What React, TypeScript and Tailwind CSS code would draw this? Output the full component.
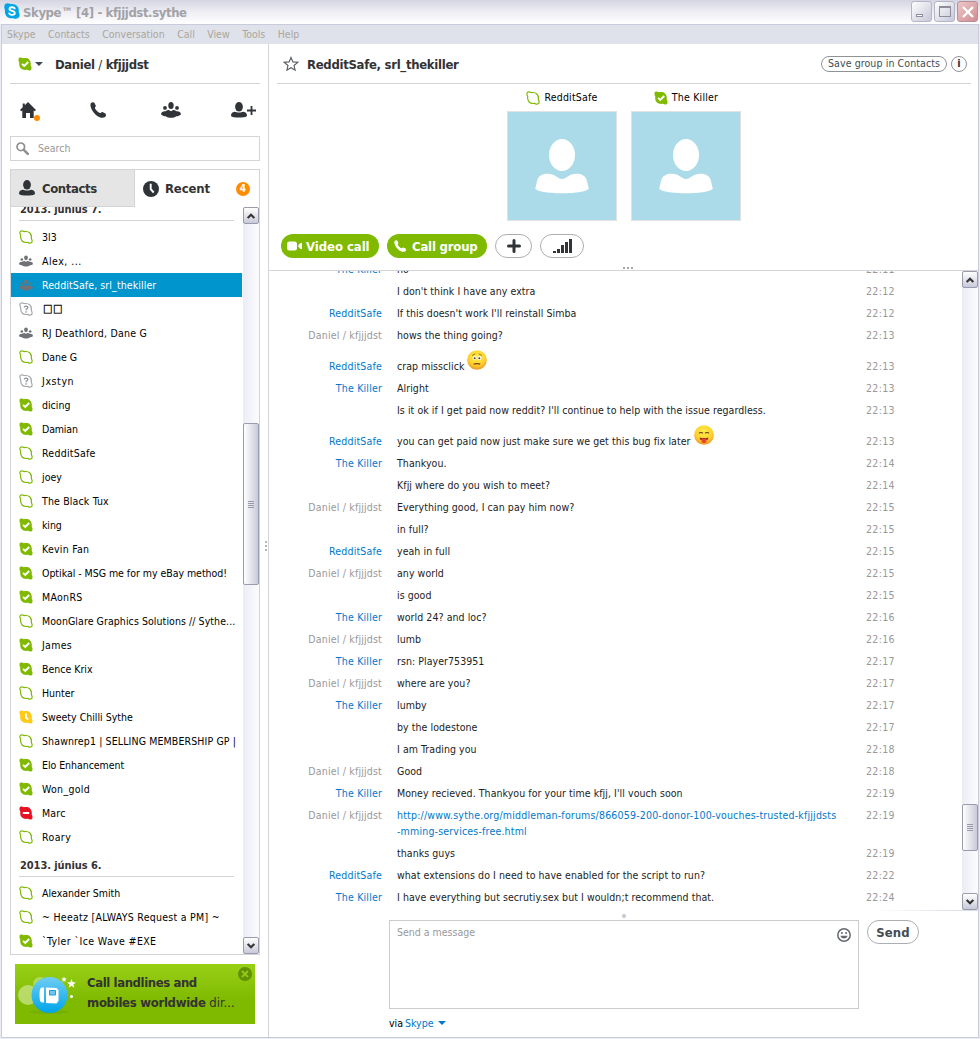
import React from 'react';

type Status = 'offline' | 'online' | 'away' | 'busy' | 'unknown' | 'group';

interface Contact {
  name: string;
  status: Status;
  selected?: boolean;
  track?: string;
}

interface Message {
  from?: string;
  text: string;
  time: string;
  me?: boolean;
  emoji?: 'worried' | 'tongue';
  link?: string[];
}

const june7: Contact[] = [
  { name: '3l3', status: 'offline' },
  { name: 'Alex, ...', status: 'group', track: 'tracking-[0.5px]' },
  { name: 'RedditSafe, srl_thekiller', status: 'group', selected: true },
  { name: '□□', status: 'unknown' },
  { name: 'RJ Deathlord, Dane G', status: 'group', track: 'tracking-[0.25px]' },
  { name: 'Dane G', status: 'offline' },
  { name: 'Jxstyn', status: 'unknown', track: 'tracking-[0.6px]' },
  { name: 'dicing', status: 'online' },
  { name: 'Damian', status: 'online', track: 'tracking-[-0.15px]' },
  { name: 'RedditSafe', status: 'offline', track: 'tracking-[0.25px]' },
  { name: 'joey', status: 'offline' },
  { name: 'The Black Tux', status: 'offline', track: 'tracking-[0.15px]' },
  { name: 'king', status: 'online', track: 'tracking-[-0.1px]' },
  { name: 'Kevin Fan', status: 'online', track: 'tracking-[0.25px]' },
  { name: 'Optikal - MSG me for my eBay method!', status: 'online', track: 'tracking-[-0.03px]' },
  { name: 'MAonRS', status: 'online', track: 'tracking-[0.3px]' },
  { name: 'MoonGlare Graphics Solutions // Sythe...', status: 'offline', track: 'tracking-[0.07px]' },
  { name: 'James', status: 'online', track: 'tracking-[0.3px]' },
  { name: 'Bence Krix', status: 'online' },
  { name: 'Hunter', status: 'offline' },
  { name: 'Sweety Chilli Sythe', status: 'away' },
  { name: 'Shawnrep1 | SELLING MEMBERSHIP GP |', status: 'offline', track: 'tracking-[0.12px]' },
  { name: 'Elo Enhancement', status: 'online', track: 'tracking-[-0.05px]' },
  { name: 'Won_gold', status: 'online', track: 'tracking-[0.3px]' },
  { name: 'Marc', status: 'busy', track: 'tracking-[0.2px]' },
  { name: 'Roary', status: 'offline', track: 'tracking-[0.4px]' },
];

const june6: Contact[] = [
  { name: 'Alexander Smith', status: 'offline' },
  { name: '~ Heeatz [ALWAYS Request a PM] ~', status: 'offline', track: 'tracking-[0.27px]' },
  { name: '`Tyler `Ice Wave #EXE', status: 'online', track: 'tracking-[0.38px]' },
];

const me = 'Daniel / kfjjjdst';

const messages: Message[] = [
  { from: 'The Killer', text: 'no', time: '22:11' },
  { text: "I don't think I have any extra", time: '22:12' },
  { from: 'RedditSafe', text: "If this doesn't work I'll reinstall Simba", time: '22:12' },
  { from: me, me: true, text: 'hows the thing going?', time: '22:13' },
  { from: 'RedditSafe', text: 'crap missclick', time: '22:13', emoji: 'worried' },
  { from: 'The Killer', text: 'Alright', time: '22:13' },
  { text: "Is it ok if I get paid now reddit? I'll continue to help with the issue regardless.", time: '22:13' },
  { from: 'RedditSafe', text: 'you can get paid now just make sure we get this bug fix later', time: '22:13', emoji: 'tongue' },
  { from: 'The Killer', text: 'Thankyou.', time: '22:14' },
  { text: 'Kfjj where do you wish to meet?', time: '22:14' },
  { from: me, me: true, text: 'Everything good, I can pay him now?', time: '22:15' },
  { text: 'in full?', time: '22:15' },
  { from: 'RedditSafe', text: 'yeah in full', time: '22:15' },
  { from: me, me: true, text: 'any world', time: '22:15' },
  { text: 'is good', time: '22:15' },
  { from: 'The Killer', text: 'world 24? and loc?', time: '22:16' },
  { from: me, me: true, text: 'lumb', time: '22:16' },
  { from: 'The Killer', text: 'rsn: Player753951', time: '22:17' },
  { from: me, me: true, text: 'where are you?', time: '22:17' },
  { from: 'The Killer', text: 'lumby', time: '22:17' },
  { text: 'by the lodestone', time: '22:17' },
  { text: 'I am Trading you', time: '22:18' },
  { from: me, me: true, text: 'Good', time: '22:18' },
  { from: 'The Killer', text: "Money recieved. Thankyou for your time kfjj, I'll vouch soon", time: '22:19' },
  {
    from: me,
    me: true,
    text: '',
    time: '22:19',
    link: [
      'http://www.sythe.org/middleman-forums/866059-200-donor-100-vouches-trusted-kfjjjdsts',
      '-mming-services-free.html',
    ],
  },
  { text: 'thanks guys', time: '22:19' },
  { from: 'RedditSafe', text: 'what extensions do I need to have enabled for the script to run?', time: '22:22' },
  { from: 'The Killer', text: 'I have everything but secrutiy.sex but I wouldn;t recommend that.', time: '22:24' },
];

const BLOB =
  'M1 .9C2.2.1 3.9.4 4.9 1.2 7.5.9 9.8 1.1 11.2 2.7 12.7 4.3 13 6.300 12.7 8.6 13.5 10 14 11.8 13 13 11.800 13.9 10.1 13.6 9.1 12.8 6.5 13.1 4.2 12.9 2.8 11.3 1.3 9.7 1 7.7 1.3 5.4.5 4 0 2.2 1 .9Z';

const GroupIcon: React.FC<{ className?: string }> = ({ className }) => (
  <svg viewBox="0 0 20 16" className={className} fill="currentColor">
    <ellipse cx="10" cy="3.5" rx="2.7" ry="3.5" />
    <circle cx="4" cy="5.900" r="1.900" />
    <circle cx="16" cy="5.900" r="1.900" />
    <path d="M0 12.300C.3 10 1.800 9 4.500 9.200 5.500 8.200 7 7.900 7.800 7.900L10 9.200l2.200-1.300c.8 0 2.300.3 3.300 1.300 2.700-.2 4.200.8 4.500 3.100-1.300 1.500-3 2-4.800 2-2.200 2-8.200 2-10.400 0-1.800 0-3.500-.5-4.800-2Z" />
  </svg>
);

const PersonIcon: React.FC<{ className?: string }> = ({ className }) => (
  <svg viewBox="0 0 16 16" className={className} fill="currentColor">
    <ellipse cx="8" cy="4.800" rx="3.900" ry="4.800" />
    <path d="M0 14c0-2.700 1-4.100 3.700-4.300 1.300-.1 2.300.8 4.300.8s3-.9 4.300-.8C15 9.900 16 11.300 16 14c-1.500 2-14.500 2-16 0Z" />
  </svg>
);

const PhoneIcon: React.FC<{ className?: string }> = ({ className }) => (
  <svg viewBox="0 0 16 16" className={className} fill="currentColor">
    <path d="M1 1C2 0 3.800 0 4.500 1L5.800 3.700c.3 1-1 1.600-.9 2.500C6 8.300 7.700 10 10 11.100c1 0 1.500-1.300 2.500-1l2.900 1.300c.9.900.8 3-.3 3.700-2 1.300-6 .9-9.700-2.700C1.200 8.300-.6 3.300 1 1Z" />
  </svg>
);

const StatusIcon: React.FC<{ status: Status; className?: string }> = ({ status, className = 'size-3.5' }) => {
  if (status === 'group') {
    return <GroupIcon className="h-3 w-3.5 text-[#6f7378]" />;
  }
  if (status === 'offline' || status === 'unknown') {
    return (
      <svg viewBox="0 0 14 14" className={className}>
        <path
          d={BLOB}
          transform="translate(.5 .5) scale(.93)"
          fill="none"
          stroke={status === 'offline' ? '#7fba00' : '#a5a9ac'}
          strokeWidth="1.300"
        />
        {status === 'unknown' && (
          <>
            <path d="M5.300 5.600c0-2 3.500-2 3.500 0C8.800 6.800 7 6.900 7 8.300" fill="none" stroke="#8b9094" strokeWidth="1.300" />
            <rect x="6.300" y="9.300" width="1.400" height="1.300" fill="#8b9094" />
          </>
        )}
      </svg>
    );
  }
  const fill = status === 'online' ? '#7fba00' : status === 'away' ? '#ffc917' : '#e81123';
  return (
    <svg viewBox="0 0 14 14" className={className}>
      <path d={BLOB} fill={fill} />
      {status === 'online' && <path d="M4 6.900 6.200 9l4-4" fill="none" stroke="#fff" strokeWidth="1.900" />}
      {status === 'away' && <path d="M7 3.500v4.200L9.300 9.600" fill="none" stroke="#fff" strokeWidth="1.900" />}
      {status === 'busy' && <rect x="3.800" y="6" width="6.400" height="2" fill="#fff" />}
    </svg>
  );
};

const ContactRow: React.FC<{ contact: Contact }> = ({ contact }) => (
  <div
    className={`flex h-6 items-center pl-2 whitespace-nowrap ${
      contact.selected ? 'bg-[#0095cc] tracking-[0.1px] text-white' : 'text-black'
    }`}
  >
    <span className="mr-[9px] flex w-3.5 shrink-0 justify-center">
      <StatusIcon status={contact.status} />
    </span>
    {contact.name === '□□' ? (
      <span className="pl-px text-[11px] tracking-[0.7px] [-webkit-text-stroke:0.3px_black]">{contact.name}</span>
    ) : (
      <span className={`pt-px ${contact.track ?? ''}`}>{contact.name}</span>
    )}
  </div>
);

const DateHeader: React.FC<{ label: string }> = ({ label }) => (
  <div className="h-8 px-2">
    <div className="flex h-7 items-end border-b border-[#d4d4d6] pb-[3px] pl-px text-[11px] leading-[15px] font-bold tracking-[-0.08px] text-[#333]">
      {label}
    </div>
  </div>
);

const ArrowButton: React.FC<{ up?: boolean }> = ({ up }) => (
  <div className="flex h-[17px] w-4 shrink-0 items-center justify-center rounded-xs border border-[#9b9bb0] bg-linear-to-b from-white to-[#c9cad9]">
    <svg viewBox="0 0 8 6" className={`h-1.5 w-2 ${up ? 'rotate-180' : ''}`}>
      <path d="M.7.9 4 4.200 7.300.9" fill="none" stroke="#333" strokeWidth="2.100" />
    </svg>
  </div>
);

const Scrollbar: React.FC<{ before: string; thumb: string }> = ({ before, thumb }) => (
  <div className="flex w-4 shrink-0 flex-col bg-linear-to-r from-[#ebedf5] to-[#fcfcfe]">
    <ArrowButton up />
    <div className={before} />
    <div
      className={`flex shrink-0 flex-col items-center justify-center gap-px rounded-xs border border-[#9b9bb0] bg-linear-to-r from-white to-[#c9cad9] ${thumb}`}
    >
      <div className="h-px w-1.5 bg-[#9999ab]" />
      <div className="h-px w-1.5 bg-[#9999ab]" />
      <div className="h-px w-1.5 bg-[#9999ab]" />
      <div className="h-px w-1.5 bg-[#9999ab]" />
    </div>
    <div className="grow" />
    <ArrowButton />
  </div>
);

const TitleBar: React.FC = () => (
  <div className="flex h-6 shrink-0 items-start bg-linear-to-b from-[#d4d5e1] via-[#eeeef4] to-white pr-0.5 pl-1">
    <svg viewBox="0 0 16 16" className="mt-[3px] size-4">
      <path
        d="M1.200 1C2.800-.2 5 0 6.300 1c3-.4 5.500.4 7 2.300C14.700 5 15 7 14.700 9c1.200 2 1.200 4 0 5.600-1.300 1.300-3.800 1.600-5.500.6-3 .4-5.200-.3-6.700-2C1 11.300.7 9.300 1 7.200 0 5 0 2.500 1.200 1Z"
        fill="#00a5e8"
      />
      <path
        d="M10.700 5.400C9.800 3.600 5.500 3.800 5.500 6c0 2.400 5.300 1.300 5.300 3.900 0 2.400-4.700 2.600-5.600.5"
        fill="none"
        stroke="#fff"
        strokeWidth="1.900"
        strokeLinecap="round"
      />
    </svg>
    <div className="ml-[3px] grow pt-px text-[13px] leading-6 font-bold tracking-[-0.4px] text-[#a2a2a6]">
      Skype™ [4] - kfjjjdst.sythe
    </div>
    <div className="flex gap-0.5 pt-px">
      <div className="flex size-[21px] items-end rounded-[3px] border border-[#b4b5c6] bg-linear-to-br from-white to-[#c6c7d8] p-1">
        <div className="h-[3px] w-[7px] border border-[#8d8d9c] bg-white" />
      </div>
      <div className="flex size-[21px] items-center justify-center rounded-[3px] border border-[#b4b5c6] bg-linear-to-br from-white to-[#c6c7d8]">
        <div className="h-[11px] w-3 border border-t-2 border-[#8d8d9c]" />
      </div>
      <div className="flex size-[21px] items-center justify-center rounded-[3px] border border-[#b98d99] bg-linear-to-br from-[#eec7c8] to-[#d08d92]">
        <svg viewBox="0 0 12 12" className="size-3">
          <path d="m1 1 10 10M11 1 1 11" stroke="#fff" strokeWidth="2.400" />
        </svg>
      </div>
    </div>
  </div>
);

const MenuBar: React.FC = () => (
  <div className="flex h-5 shrink-0 items-center gap-[12.5px] border-t border-[#c9cadb] bg-[#dfe1eb] pl-[5px] text-[#aaa79b]">
    {['Skype', 'Contacts', 'Conversation', 'Call', 'View', 'Tools', 'Help'].map((item) => (
      <span key={item}>{item}</span>
    ))}
  </div>
);

const Banner: React.FC = () => (
  <div className="ml-[13px] flex h-[60px] w-60 bg-linear-to-b from-[#98d016] via-[#7fba00] via-60% to-[#7fba00]">
    <svg viewBox="0 0 68 60" className="h-[60px] w-[68px] shrink-0">
      <defs>
        <linearGradient id="ball" x1="0" y1="0" x2="0" y2="1">
          <stop offset="0" stopColor="#6fcdf3" />
          <stop offset="1" stopColor="#00a4ea" />
        </linearGradient>
      </defs>
      <ellipse cx="34" cy="48" rx="20" ry="2" fill="#5f9d00" opacity=".3" />
      <circle cx="25" cy="20" r="7" fill="#c1df78" opacity=".7" />
      <circle cx="13" cy="31" r="10" fill="#c5e282" opacity=".8" />
      <circle cx="34.500" cy="31" r="18" fill="url(#ball)" />
      <path d="M26.500 23.500h2.500v15h-2.500c-1.500-.5-2-3-2-7.500s.5-7 2-7.500Z" fill="#fff" />
      <path d="m31 23.500 10.500.5 2 2v11l-2 2.500L31 39Z" fill="#fff" />
      <path d="M34.500 26.500h6v4.500h-6Z" fill="#6fc7ef" stroke="#159fe0" />
      <path
        d="m56.500 15 1.200 3.300 3.300.1-2.700 2.100 1 3.300-2.800-2-2.800 2 1-3.300-2.700-2.100 3.300-.1ZM49 12.500l.8 2 2 .1-1.600 1.300.5 2L49 16.800l-1.700 1.100.5-2-1.600-1.300 2-.1Z"
        fill="#fff"
      />
      <circle cx="56.500" cy="32.500" r="1.500" fill="#fff" />
    </svg>
    <div className="ml-1 w-[151px] shrink-0 pt-[9px] text-[13px] leading-5 whitespace-nowrap text-[#333]">
      <div className="font-bold tracking-[-0.4px]">Call landlines and</div>
      <div>
        <span className="font-bold tracking-[-0.3px]">mobiles worldwide</span> dir...
      </div>
    </div>
    <svg viewBox="0 0 14 14" className="mt-[3px] size-3.5 shrink-0">
      <circle cx="7" cy="7" r="7" fill="#619000" />
      <path d="m4 4 6 6M10 4l-6 6" stroke="#93ca18" strokeWidth="1.800" />
    </svg>
  </div>
);

const Sidebar: React.FC = () => (
  <div className="flex w-[267px] shrink-0 flex-col border-r border-[#d4d4d8]">
    <div className="mr-2 ml-2 flex h-10 items-center border-b border-[#d4d4d6] pl-2 text-[13px] font-bold text-[#333]">
      <StatusIcon status="online" className="size-3.5" />
      <svg viewBox="0 0 8 4" className="ml-[3px] h-1 w-2">
        <path d="M0 0h8L4 4Z" fill="#40494f" />
      </svg>
      <span className="ml-3 pt-0.5 tracking-[-0.37px] whitespace-pre">
        Daniel <span className="font-normal">/</span> kfjjjdst
      </span>
    </div>

    <div className="flex h-[52px] items-center text-[#303438]">
      <div className="relative ml-[18px] size-4">
        <svg viewBox="0 0 16 16" className="size-4" fill="currentColor">
          <path d="M8 0 16 8l-1.300 1.200-1-.8V16H10v-5H6v5H2.300V8.400l-1 .8L0 8l2.700-2.700V1.500h2.100v1.700Z" />
        </svg>
        <div className="absolute top-[13px] left-3.5 size-1.5 rounded-full bg-[#ff8c00]" />
      </div>
      <PhoneIcon className="ml-[54px] size-4" />
      <GroupIcon className="ml-[55px] h-4 w-5" />
      <div className="ml-[50px] flex items-center">
        <PersonIcon className="size-4" />
        <svg viewBox="0 0 9 9" className="h-[9px] w-[9px]">
          <path d="M4.500 0v9M0 4.500h9" stroke="currentColor" strokeWidth="1.800" />
        </svg>
      </div>
    </div>

    <div className="mx-2 flex h-[25px] w-[250px] items-center border border-[#d4d4d6] pl-[5px] text-[#999]">
      <svg viewBox="0 0 13 13" className="size-[13px]" fill="none" stroke="#909090">
        <circle cx="4.800" cy="4.800" r="3.800" strokeWidth="1.700" />
        <path d="m7.800 7.800 4 4" strokeWidth="2.600" strokeLinecap="round" />
      </svg>
      <span className="ml-[9px] pt-px">Search</span>
    </div>

    <div className="mt-2 ml-2 flex h-[786px] w-[250px] flex-col border border-[#d4d4d6]">
      <div className="flex h-[37px] shrink-0 text-[13px] font-bold text-[#333]">
        <div className="flex w-[124px] items-center border-r border-b border-[#d4d4d6] bg-[#e5e5e5] pl-2">
          <PersonIcon className="size-4 text-[#303438]" />
          <span className="ml-[7px] pt-px tracking-[-0.4px]">Contacts</span>
        </div>
        <div className="flex grow items-center pl-2">
          <svg viewBox="0 0 16 16" className="size-4">
            <circle cx="8" cy="8" r="8" fill="#303438" />
            <path d="M7.700 2.800v5.400l3 3.300" fill="none" stroke="#fff" strokeWidth="1.900" />
          </svg>
          <span className="ml-1.5 grow tracking-[-0.15px]">Recent</span>
          <span className="mr-[9px] flex size-3.5 items-center justify-center rounded-full bg-[#ff8c00] text-[10px] text-white">
            4
          </span>
        </div>
      </div>
      <div className="flex min-h-0 grow">
        <div className="w-[231px] shrink-0 overflow-hidden">
          <div className="-mt-3.5">
            <DateHeader label="2013. június 7." />
            {june7.map((c) => (
              <ContactRow key={c.name} contact={c} />
            ))}
            <DateHeader label="2013. június 6." />
            {june6.map((c) => (
              <ContactRow key={c.name} contact={c} />
            ))}
          </div>
        </div>
        <div className="flex pl-px">
          <Scrollbar before="h-[199px] shrink-0" thumb="h-[162px]" />
        </div>
      </div>
    </div>

    <div className="mt-[9px]">
      <Banner />
    </div>
  </div>
);

const Avatar: React.FC<{ name: string; status: Status }> = ({ name, status }) => (
  <div className="flex w-[110px] flex-col items-center">
    <div className="flex h-[27px] items-center gap-1 pt-px tracking-[0.2px] text-black">
      <StatusIcon status={status} />
      {name}
    </div>
    <svg viewBox="0 0 108 108" className="size-[110px] border border-[#e2e2e2] bg-[#abdbe9]">
      <ellipse cx="54" cy="43" rx="13" ry="16" fill="#fff" />
      <path
        d="M29.500 67.500C31 62 39 60.500 44.500 62.500 49 64.300 51 67 54 67s5-2.700 9.500-4.500C69 60.500 77 62 78.500 67.500l2.200 8.500C81 83 27 83 27.300 76Z"
        fill="#fff"
      />
    </svg>
  </div>
);

const CallBar: React.FC = () => (
  <div className="ml-3 flex h-6 gap-2 text-[13px] font-bold text-white">
    <div className="flex w-[98px] items-center rounded-full bg-[#7fba00] pl-1.5 whitespace-nowrap">
      <svg viewBox="0 0 15 10" className="h-2.5 w-[15px] shrink-0" fill="#fff">
        <rect y=".5" width="10" height="9" rx="2.500" />
        <path d="m11 5 1-1.500 1.500-1.500H15v6h-1.500L12 6.500Z" />
      </svg>
      <span className="ml-1 pt-px tracking-[-0.05px]">Video call</span>
    </div>
    <div className="flex w-[100px] items-center rounded-full bg-[#7fba00] pl-[7px] whitespace-nowrap">
      <PhoneIcon className="size-3 shrink-0" />
      <span className="ml-1.5 pt-px tracking-[-0.2px]">Call group</span>
    </div>
    <div className="flex w-[37px] items-center justify-center rounded-full border border-[#acafb1]">
      <svg viewBox="0 0 14 14" className="size-3.5">
        <path d="M7 1.500v11M1.500 7h11" stroke="#303438" strokeWidth="3" strokeLinecap="round" />
      </svg>
    </div>
    <div className="flex w-11 items-center justify-center rounded-full border border-[#acafb1]">
      <svg viewBox="0 0 19 14" className="h-3.5 w-[19px]" fill="#303438">
        <path d="M0 12h3v2H0ZM4 10h3v4H4ZM8 6h3v8H8ZM12 3h3v11h-3ZM16 0h3v14h-3Z" />
      </svg>
    </div>
  </div>
);

const Emoji: React.FC<{ kind: 'worried' | 'tongue' }> = ({ kind }) => (
  <svg viewBox="0 0 20 20" className="ml-[3px] size-5">
    <defs>
      <radialGradient id={`face-${kind}`} cx=".5" cy=".35" r=".65">
        <stop offset="0" stopColor="#ffee4e" />
        <stop offset=".65" stopColor="#ffd22e" />
        <stop offset="1" stopColor="#ee9324" />
      </radialGradient>
    </defs>
    <circle cx="10" cy="10" r="9.800" fill={`url(#face-${kind})`} />
    {kind === 'worried' ? (
      <>
        <path d="M5 5.500 8.500 3.800M15 5.500l-3.500-1.700" stroke="#a97316" />
        <ellipse cx="7.500" cy="8" rx="1.900" ry="1.900" fill="#fff" />
        <ellipse cx="12.500" cy="8" rx="1.900" ry="1.900" fill="#fff" />
        <circle cx="7.700" cy="8.200" r="1" fill="#4b3d55" />
        <circle cx="12.300" cy="8.200" r="1" fill="#4b3d55" />
        <path d="M6.700 14.200q3.300-1 6.600 0" fill="none" stroke="#7b3b0d" strokeWidth="1.300" />
      </>
    ) : (
      <>
        <path d="M5 8.300q2-1.600 4 0M11 8.300q2-1.600 4 0" fill="none" stroke="#6b4311" strokeWidth="1.200" />
        <path d="M5.500 12.500q4.500 1 9 0l-1 2.500h-7Z" fill="#86310e" />
        <path d="M7.500 13.500h5v2.500c0 2.800-5 2.800-5 0Z" fill="#ea4335" />
      </>
    )}
  </svg>
);

const MessageRow: React.FC<{ message: Message }> = ({ message }) => (
  <div
    className={`flex shrink-0 leading-4 whitespace-nowrap ${
      message.link ? 'h-[38px] pt-[3px]' : message.emoji ? 'h-[31px] items-end pb-[3px]' : 'h-[22px] pt-[3px]'
    }`}
  >
    <div className={`w-[113px] text-right tracking-[0.18px] ${message.me ? 'text-[#999]' : 'text-[#0078ca]'}`}>
      {message.from}
    </div>
    <div className="ml-[15px] flex h-4 w-[469px] items-end tracking-[0.06px] text-[#222]">
      {message.link ? (
        <div className="self-start text-[#0078ca]">
          {message.link.map((line) => (
            <div key={line} className="tracking-[0.19px]">
              {line}
            </div>
          ))}
        </div>
      ) : (
        message.text
      )}
      {message.emoji && (
        <span className="mb-1 flex">
          <Emoji kind={message.emoji} />
        </span>
      )}
    </div>
    <div className="tracking-[0.35px] text-[#999]">{message.time}</div>
  </div>
);

const Conversation: React.FC = () => (
  <div className="flex min-w-0 grow flex-col">
    <div className="mr-[7px] ml-2 flex h-10 shrink-0 items-center border-b border-[#d4d4d6] pl-1.5">
      <svg viewBox="0 0 16 16" className="size-4">
        <path
          d="m8 1.500 1.900 4.400 4.800.4L11 9.500l1.100 4.700L8 11.700l-4.100 2.500L5 9.500 1.300 6.300l4.800-.4Z"
          fill="none"
          stroke="#555a5e"
          strokeWidth="1.100"
        />
      </svg>
      <span className="ml-2 grow pt-0.5 text-[13px] font-bold tracking-[-0.3px] text-[#333]">
        RedditSafe, srl_thekiller
      </span>
      <span className="flex h-4 w-[126px] items-center justify-center rounded-full border border-[#8f9396] pt-px tracking-[0.1px] text-[#444c52]">
        Save group in Contacts
      </span>
      <span className="mr-1 ml-1 flex size-4 items-center justify-center rounded-full border border-[#8f9396]">
        <span className="text-[11px] leading-none font-bold text-[#333]">i</span>
      </span>
    </div>

    <div className="ml-[238px] flex gap-3.5">
      <Avatar name="RedditSafe" status="offline" />
      <Avatar name="The Killer" status="online" />
    </div>
    <div className="h-[13px] shrink-0" />
    <CallBar />
    <div className="flex h-[13px] shrink-0 items-end justify-center gap-0.5 border-b border-[#d4d4d6] pb-px pl-2">
      <div className="size-0.5 bg-[#a5a5a8]" />
      <div className="size-0.5 bg-[#a5a5a8]" />
      <div className="size-0.5 bg-[#a5a5a8]" />
    </div>

    <div className="flex h-[639px] shrink-0">
      <div className="flex grow flex-col overflow-hidden">
        <div className="-mt-[13px] flex flex-col">
          {messages.map((m, i) => (
            <MessageRow key={i} message={m} />
          ))}
        </div>
      </div>
      <Scrollbar before="h-[516px] shrink-0" thumb="h-[47px]" />
    </div>

    <div className="h-px shrink-0 bg-linear-to-r from-white from-85% to-[#d5d9e5]" />
    <div className="flex h-[9px] shrink-0 items-center justify-center">
      <div className="size-1 rounded-full bg-[#c4c8d2]" />
    </div>

    <div className="ml-[120px] flex">
      <div className="flex h-[89px] w-[470px] justify-between border border-[#cbcbcb] pt-[3px] pr-[7px] pl-[7px] text-[#999]">
        <span className="leading-4">Send a message</span>
        <svg viewBox="0 0 14 14" className="mt-1 size-3.5">
          <circle cx="7" cy="7" r="6.200" fill="none" stroke="#666a6e" strokeWidth="1.500" />
          <circle cx="4.900" cy="5" r="1" fill="#666a6e" />
          <circle cx="9.100" cy="5" r="1" fill="#666a6e" />
          <path d="M3.500 7.800h7c-.3 3.700-6.700 3.700-7 0Z" fill="#666a6e" />
        </svg>
      </div>
      <div className="ml-2 flex h-6 w-[52px] items-center justify-center rounded-full border border-[#acafb1] pt-px text-[13px] font-bold tracking-[0.1px] text-[#444c52]">
        Send
      </div>
    </div>
    <div className="mt-1.5 ml-[120px] flex items-center leading-4 text-black">
      via <span className="ml-0.5 text-[#0078ca]">Skype</span>
      <svg viewBox="0 0 8 4" className="ml-1 h-1 w-2">
        <path d="M0 0h8L4 4Z" fill="#0078ca" />
      </svg>
    </div>
  </div>
);

const App: React.FC = () => {
  return (
    <div className="flex h-[1039px] w-[980px] flex-col overflow-hidden bg-[#ececf4] font-['DejaVu_Sans_Condensed','DejaVu_Sans',sans-serif] text-[10.5px] font-stretch-condensed">
      <TitleBar />
      <div className="mr-px ml-px flex h-[1014px] flex-col border-x border-b border-[#c9cadb] bg-white">
        <MenuBar />
        <div className="flex min-h-0 grow">
          <Sidebar />
          <div className="relative">
            <div className="absolute top-[497px] -left-1 flex flex-col gap-0.5">
              <div className="size-0.5 bg-[#b5b5b8]" />
              <div className="size-0.5 bg-[#b5b5b8]" />
              <div className="size-0.5 bg-[#b5b5b8]" />
            </div>
          </div>
          <Conversation />
        </div>
      </div>
    </div>
  );
};

export default App;
